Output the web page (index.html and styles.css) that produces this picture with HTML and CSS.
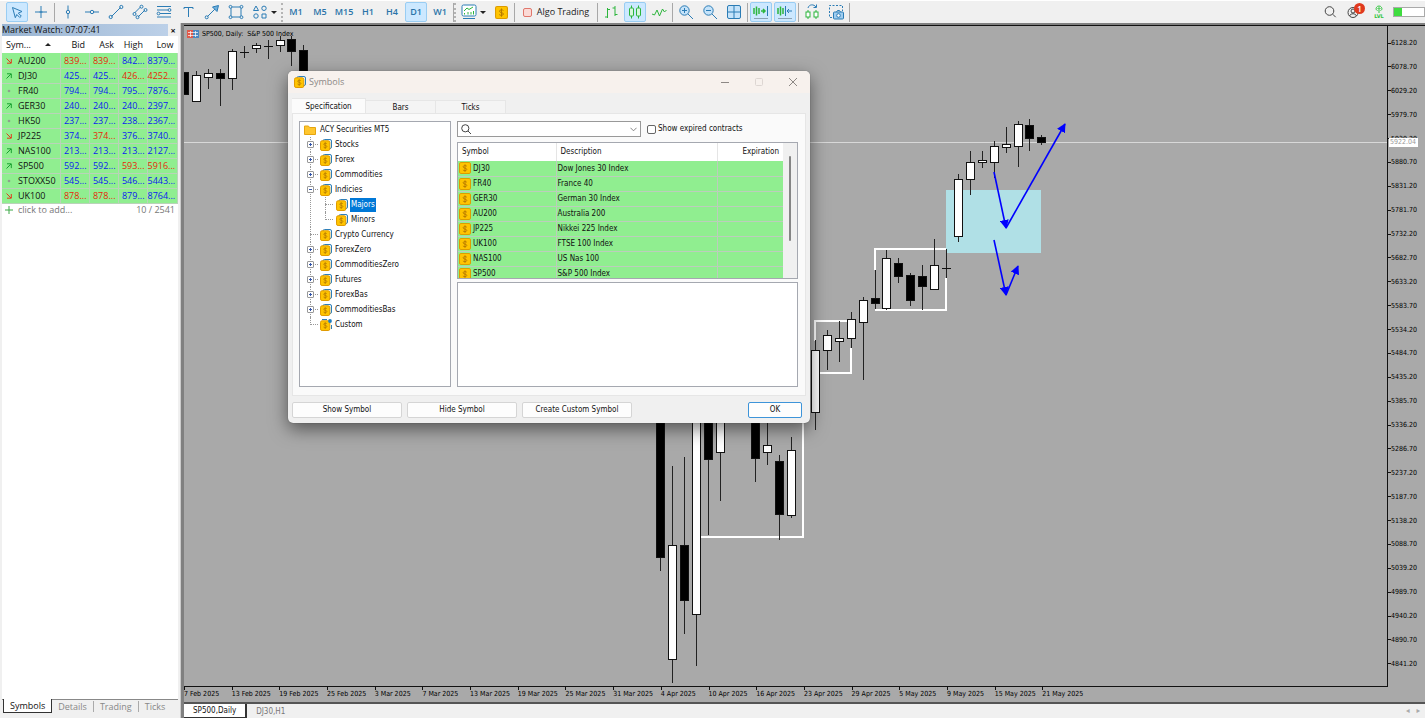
FILE: index.html
```html
<!DOCTYPE html>
<html lang="en">
<head>
<meta charset="utf-8">
<title>SP500,Daily</title>
<link rel="stylesheet" href="styles.css">
</head>
<body>
<svg class="defs" aria-hidden="true">
  <symbol id="coin" viewBox="0 0 12 12"><rect x="3" y=".5" width="8.5" height="9" rx="1.5" fill="#e8f3fb" stroke="#2f7fb8"/><rect x=".5" y="1.8" width="9.3" height="9.7" rx="1.6" fill="#ffc400" stroke="#e09a00"/><path d="M6.9 4.7c-.4-.6-3.2-.8-3.2.5 0 1.5 3.2.8 3.2 2.3 0 1.4-2.9 1.3-3.4.5M5.2 3.2v6.8" fill="none" stroke="#b57900" stroke-width=".8"/></symbol>
  <symbol id="coin1" viewBox="0 0 12 12"><rect x=".5" y=".5" width="11" height="11" rx="1.4" fill="#ffc400" stroke="#dd9c00"/><path d="M7.8 4.2c-.5-.8-3.7-1-3.7.6 0 1.7 3.7.9 3.7 2.6 0 1.6-3.3 1.5-3.9.5M6 2.3v7.6" fill="none" stroke="#b57900" stroke-width=".9"/></symbol>
  <symbol id="up" viewBox="0 0 6 6"><path d="M.5 5.5l4.5-4.5M1 .8h4.3v4.3" fill="none" stroke="#18a030"/></symbol>
  <symbol id="down" viewBox="0 0 6 6"><path d="M.5 .5l4.5 4.500M5.300 1v4.200h-4.300" fill="none" stroke="#e03a1c"/></symbol>
  <symbol id="flat" viewBox="0 0 6 6"><circle cx="3" cy="3" r="1.300" fill="#8fa08f"/></symbol>
</svg>

<header class="toolbar">
  <button class="tool on" aria-label="Cursor"><svg class="ic" viewBox="0 0 16 16"><path d="M3.500 3.500l9.500 4-3.700 1.600 3 3-1.500 1.400-3-3-1.500 3.200z"/></svg></button>
  <button class="tool" aria-label="Crosshair"><svg class="ic" viewBox="0 0 16 16"><path d="M8 2v12M2 8h12M6.500 8h3"/></svg></button>
  <span class="sep"></span>
  <button class="tool" aria-label="Vertical line"><svg class="ic" viewBox="0 0 16 16"><path d="M8 1.500v4.500M8 10v4.500"/><circle cx="8" cy="8" r="1.700"/></svg></button>
  <button class="tool" aria-label="Horizontal line"><svg class="ic" viewBox="0 0 16 16"><path d="M1 8h5M10 8h5"/><circle cx="8" cy="8" r="1.700"/></svg></button>
  <button class="tool" aria-label="Trend line"><svg class="ic" viewBox="0 0 16 16"><path d="M3.500 12.500l9-9"/><circle cx="2.700" cy="13" r="1.600"/><circle cx="13.300" cy="3" r="1.600"/></svg></button>
  <button class="tool" aria-label="Channel"><svg class="ic" viewBox="0 0 16 16"><path d="M2.500 9l6-6M6 13l7-7"/><circle cx="2.500" cy="10" r="1.500"/><circle cx="9.500" cy="2.700" r="1.500"/><circle cx="5.500" cy="13.200" r="1.500"/><circle cx="13.500" cy="6" r="1.500"/></svg></button>
  <button class="tool" aria-label="Fibonacci"><svg class="ic" viewBox="0 0 16 16"><path d="M1 2.500h14M1 6h11M4 9.500h11M1 13h14"/><circle cx="13.500" cy="6" r="1.400"/><circle cx="2.500" cy="9.500" r="1.400"/></svg></button>
  <button class="tool" aria-label="Text"><svg class="ic" viewBox="0 0 16 16"><path d="M4 5v-1.500h9v1.500M8.500 3.500v9.500"/></svg></button>
  <button class="tool" aria-label="Arrow line"><svg class="ic" viewBox="0 0 16 16"><path d="M3.500 12.500l8-8"/><path d="M8.500 3l6-1.500-1.500 6z" fill="#6fb0dd"/><circle cx="2.700" cy="13.300" r="1.500"/></svg></button>
  <button class="tool" aria-label="Rectangle"><svg class="ic" viewBox="0 0 16 16"><path d="M4 3h8M4 13h8M3 4v8M13 4v8"/><circle cx="2.500" cy="2.800" r="1.400"/><circle cx="13.500" cy="2.800" r="1.400"/><circle cx="2.500" cy="13.200" r="1.400"/><circle cx="13.500" cy="13.200" r="1.400"/></svg></button>
  <button class="tool drop" aria-label="Shapes"><svg class="ic" viewBox="0 0 16 16"><path d="M4 2l2.500 4.500h-5zM10 10h4v4h-4z"/><circle cx="12" cy="4.300" r="2.200"/><circle cx="4" cy="12" r="2.200"/></svg><i class="caret"></i></button>
  <span class="grip"></span>
  <button class="tool">M1</button><button class="tool">M5</button><button class="tool">M15</button><button class="tool">H1</button><button class="tool">H4</button><button class="tool on">D1</button><button class="tool">W1</button>
  <span class="sep"></span><span class="grip"></span>
  <button class="tool drop" aria-label="Chart list"><svg class="ic" viewBox="0 0 16 16"><rect x="1" y="1" width="14" height="11" rx="1.500" fill="#fff"/><path d="M2 14.500h12"/><path class="gr" d="M3 7l3-3 2 1.500 4-2.500M3.500 10.500V9M7 10.500V8M10 10.500V8M12.500 10.500V7"/></svg><i class="caret"></i></button>
  <button class="tool" aria-label="Symbols"><svg class="ic coin"><use href="#coin1"/></svg></button>
  <span class="sep"></span>
  <button class="tool algo"><i class="stop"></i>Algo Trading</button>
  <span class="sep"></span>
  <button class="tool" aria-label="Bars"><svg class="ic gr" viewBox="0 0 16 16"><path d="M4.500 4v10M2 13h2.500M4.500 5.500h2.500M12 2v10M9.500 4h2.500M12 10.500h2.500"/></svg></button>
  <button class="tool on" aria-label="Candles"><svg class="ic gr" viewBox="0 0 16 16"><path d="M4.500 1.500v13M11.500 1.500v13"/><rect x="2.500" y="4" width="4" height="8" rx="1" fill="#d7f7dc"/><rect x="9.500" y="4" width="4" height="8" rx="1" fill="#d7f7dc"/></svg></button>
  <button class="tool" aria-label="Line"><svg class="ic gr" viewBox="0 0 16 16"><path d="M1 10l2.500 1 2.500-5 2.500 6 3-7 2 3 2-2"/></svg></button>
  <span class="sep"></span>
  <button class="tool" aria-label="Zoom in"><svg class="ic" viewBox="0 0 16 16"><circle cx="6.500" cy="6.500" r="4.700" fill="#c5e3fa"/><path d="M10 10l5 5M4 6.500h5M6.500 4v5"/></svg></button>
  <button class="tool" aria-label="Zoom out"><svg class="ic" viewBox="0 0 16 16"><circle cx="6.500" cy="6.500" r="4.700" fill="#c5e3fa"/><path d="M10 10l5 5M4 6.500h5"/></svg></button>
  <button class="tool" aria-label="Tile"><svg class="ic" viewBox="0 0 16 16"><rect x="1.500" y="1.500" width="13" height="13" rx="1.500" fill="#c5e3fa"/><path d="M8 2v12M2 8h12"/></svg></button>
  <span class="sep"></span>
  <button class="tool on" aria-label="Auto scroll"><svg class="ic" viewBox="0 0 16 16"><path class="gr" stroke-width="1.500" d="M1 4v6M3.500 2.500v9M6 4v6M8 7h4M10 5l2 2-2 2"/><path d="M14.500 2v10"/><path d="M1 14.500h14" stroke="#8ba3b5"/></svg></button>
  <button class="tool on" aria-label="Chart shift"><svg class="ic" viewBox="0 0 16 16"><path class="gr" stroke-width="1.500" d="M1 4v6M3.500 2.500v9M6 4v6"/><path d="M8.500 2v10M10 7h5M12 5l-2 2 2 2"/><path d="M1 14.500h14" stroke="#8ba3b5"/></svg></button>
  <span class="sep"></span>
  <button class="tool" aria-label="Switch"><svg class="ic" viewBox="0 0 16 16"><path d="M4 4c1-4 6-4 8-1M12.500 .5v3h-3"/><path class="gr" d="M4 6v9M12 6v9"/><rect class="gr" x="2" y="8" width="4" height="5" fill="#fff"/><rect class="gr" x="10" y="8" width="4" height="5" fill="#fff"/></svg></button>
  <button class="tool" aria-label="Screenshot"><svg class="ic" viewBox="0 0 16 16"><path stroke-dasharray="2 1.500" d="M4 13.500H1.500v-12h13V7"/><rect x="5.500" y="8" width="10" height="7" rx="1" fill="#9fcdf0"/><path d="M8.500 8l1-1.500h2l1 1.500"/><circle cx="10.500" cy="11.500" r="1.800" fill="#fff"/></svg></button>
  <span class="sep"></span>
  <div class="status">
    <button class="tool" aria-label="Search"><svg class="ic dk" viewBox="0 0 16 16"><circle cx="7.500" cy="7" r="4.300"/><path d="M10.700 10.200l3 3"/></svg></button>
    <button class="tool account" aria-label="Account"><svg class="ic dk" viewBox="0 0 16 16"><circle cx="7" cy="8.500" r="5"/><circle cx="7" cy="7" r="2"/><path d="M3.500 12c1-3 6-3 7 0"/></svg><span class="badge">1</span></button>
    <button class="tool lvl" aria-label="Level"><svg viewBox="0 0 8 8"><path d="M4 8V3M2.500 5.500C0 5 1 1 4 1s4 4 1.500 4.500M2.500 4l1.500-1.500L5.500 4" fill="none" stroke="#2fc53c"/></svg><span>LVL</span></button>
    <span class="meter"><i></i></span>
  </div>
</header>

<div class="work">
  <aside class="watch">
    <div class="caption"><h2>Market Watch: 07:07:41</h2><button aria-label="Close">×</button></div>
    <table class="quotes">
      <colgroup><col class="c-sym"><col class="c-bid"><col class="c-bid"><col class="c-bid"><col></colgroup>
      <thead><tr><th>Sym... <i class="sort"></i></th><th>Bid</th><th>Ask</th><th>High</th><th>Low</th></tr></thead>
      <tbody>
        <tr><td><svg><use href="#down"/></svg>AU200</td><td class="r">839...</td><td class="r">839...</td><td>842...</td><td>8379...</td></tr>
        <tr><td><svg><use href="#up"/></svg>DJ30</td><td>425...</td><td>425...</td><td class="r">426...</td><td class="r">4252...</td></tr>
        <tr><td><svg><use href="#flat"/></svg>FR40</td><td>794...</td><td>794...</td><td>795...</td><td>7876...</td></tr>
        <tr><td><svg><use href="#up"/></svg>GER30</td><td>240...</td><td>240...</td><td>240...</td><td>2397...</td></tr>
        <tr><td><svg><use href="#flat"/></svg>HK50</td><td>237...</td><td>237...</td><td>238...</td><td>2367...</td></tr>
        <tr><td><svg><use href="#down"/></svg>JP225</td><td>374...</td><td class="r">374...</td><td>376...</td><td>3740...</td></tr>
        <tr><td><svg><use href="#up"/></svg>NAS100</td><td>213...</td><td>213...</td><td>213...</td><td>2127...</td></tr>
        <tr><td><svg><use href="#up"/></svg>SP500</td><td>592...</td><td>592...</td><td class="r">593...</td><td class="r">5916...</td></tr>
        <tr><td><svg><use href="#flat"/></svg>STOXX50</td><td>545...</td><td>545...</td><td>546...</td><td>5443...</td></tr>
        <tr><td><svg><use href="#down"/></svg>UK100</td><td class="r">878...</td><td class="r">878...</td><td>879...</td><td>8764...</td></tr>
      </tbody>
    </table>
    <div class="add"><svg viewBox="0 0 8 8"><path d="M4 0v8M0 4h8" stroke="#3aa845"/></svg><span>click to add...</span><span class="count">10 / 2541</span></div>
    <nav class="watch-tabs"><button class="cur">Symbols</button><button>Details</button><button>Trading</button><button>Ticks</button></nav>
  </aside>

  <main class="chart">
    <div class="plot">
      <svg class="canvas" id="canvas"></svg>
      <div class="chart-title"><svg viewBox="0 0 12 8"><path d="M0 0h6v8H0z" fill="#e05a4a"/><path d="M6 0h6v8H6z" fill="#4a86c0"/><path d="M1 2.500h10M1 5.500h10M3.500 1v6M8.500 1v6" stroke="#fff" stroke-width=".7"/></svg><span>SP500, Daily:&nbsp; S&amp;P 500 Index</span></div>
    </div>
    <div class="prices"><ul id="prices"></ul><span class="last">5922.04</span></div>
    <ul class="dates" id="dates"></ul>
    <nav class="chart-tabs"><button class="cur">SP500,Daily</button><button>DJ30,H1</button><span class="arrows">◂ &nbsp; ▸</span></nav>
  </main>
</div>

<section class="dialog" role="dialog" aria-labelledby="dlg">
  <div class="title"><svg class="sym"><use href="#coin"/></svg><h1 id="dlg">Symbols</h1>
    <button aria-label="Minimize"><svg viewBox="0 0 8 8"><path d="M0 4.500h8" stroke="#8d8885"/></svg></button>
    <button aria-label="Maximize"><svg viewBox="0 0 8 8"><rect x=".5" y=".5" width="7" height="7" rx="1" fill="none" stroke="#ddd6d2"/></svg></button>
    <button aria-label="Close"><svg viewBox="0 0 8 8"><path d="M0 0l8 8M8 0l-8 8" stroke="#8d8885"/></svg></button>
  </div>
  <div class="tabs"><button class="cur">Specification</button><button>Bars</button><button>Ticks</button></div>
  <div class="page">
    <div class="tree">
      <div class="node root"><svg class="folder" viewBox="0 0 12 10"><path d="M.5 1h4l1 1.500h6v7H.5z" fill="#ffc62e" stroke="#e5a50f"/></svg>ACY Securities MT5</div>
      <ul>
        <li><div class="node"><i class="box plus"></i><svg class="sym"><use href="#coin"/></svg>Stocks</div></li>
        <li><div class="node"><i class="box plus"></i><svg class="sym"><use href="#coin"/></svg>Forex</div></li>
        <li><div class="node"><i class="box plus"></i><svg class="sym"><use href="#coin"/></svg>Commodities</div></li>
        <li><div class="node"><i class="box"></i><svg class="sym"><use href="#coin"/></svg>Indicies</div>
          <ul>
            <li><div class="node"><svg class="sym"><use href="#coin"/></svg><span class="picked">Majors</span></div></li>
            <li><div class="node"><svg class="sym"><use href="#coin"/></svg><span class="leaf">Minors</span></div></li>
          </ul></li>
        <li><div class="node"><svg class="sym"><use href="#coin"/></svg>Crypto Currency</div></li>
        <li><div class="node"><i class="box plus"></i><svg class="sym"><use href="#coin"/></svg>ForexZero</div></li>
        <li><div class="node"><i class="box plus"></i><svg class="sym"><use href="#coin"/></svg>CommoditiesZero</div></li>
        <li><div class="node"><i class="box plus"></i><svg class="sym"><use href="#coin"/></svg>Futures</div></li>
        <li><div class="node"><i class="box plus"></i><svg class="sym"><use href="#coin"/></svg>ForexBas</div></li>
        <li><div class="node"><i class="box plus"></i><svg class="sym"><use href="#coin"/></svg>CommoditiesBas</div></li>
        <li><div class="node"><svg class="sym" viewBox="0 0 12 12"><rect x=".5" y="1.800" width="9.300" height="9.700" rx="1.600" fill="#ffc400" stroke="#e09a00"/><path d="M6.900 4.700c-.4-.6-3.200-.8-3.200.5 0 1.500 3.200.8 3.200 2.300 0 1.400-2.900 1.300-3.400.5M5.200 3.200v6.800" fill="none" stroke="#b57900" stroke-width=".8"/><circle cx="10" cy="2" r="1.900" fill="#1f7fc4"/><path d="M11.500 6v4M2 .5h5" stroke="#2f7fb8"/></svg>Custom</div></li>
      </ul>
    </div>
    <div class="side">
      <div class="filter">
        <label class="search"><svg viewBox="0 0 10 10"><circle cx="4.300" cy="4.300" r="3.600"/><path d="M7 7l3 3"/></svg><input type="text" aria-label="Search symbols"><svg class="chev" viewBox="0 0 8 5"><path d="M.5 .5l3.500 3.500L7.500 .5"/></svg></label>
        <label class="expired"><input type="checkbox">Show expired contracts</label>
      </div>
      <div class="list">
        <table>
          <colgroup><col class="c-name"><col><col class="c-exp"></colgroup>
          <thead><tr><th>Symbol</th><th>Description</th><th class="end">Expiration</th></tr></thead>
          <tbody>
            <tr><td><svg class="sym"><use href="#coin1"/></svg>DJ30</td><td>Dow Jones 30 Index</td><td></td></tr>
            <tr><td><svg class="sym"><use href="#coin1"/></svg>FR40</td><td>France 40</td><td></td></tr>
            <tr><td><svg class="sym"><use href="#coin1"/></svg>GER30</td><td>German 30 Index</td><td></td></tr>
            <tr><td><svg class="sym"><use href="#coin1"/></svg>AU200</td><td>Australia 200</td><td></td></tr>
            <tr><td><svg class="sym"><use href="#coin1"/></svg>JP225</td><td>Nikkei 225 Index</td><td></td></tr>
            <tr><td><svg class="sym"><use href="#coin1"/></svg>UK100</td><td>FTSE 100 Index</td><td></td></tr>
            <tr><td><svg class="sym"><use href="#coin1"/></svg>NAS100</td><td>US Nas 100</td><td></td></tr>
            <tr><td><svg class="sym"><use href="#coin1"/></svg>SP500</td><td>S&amp;P 500 Index</td><td></td></tr>
          </tbody>
        </table>
        <div class="scroll"><i></i></div>
      </div>
      <div class="details"></div>
    </div>
  </div>
  <div class="actions"><button>Show Symbol</button><button>Hide Symbol</button><button>Create Custom Symbol</button><button class="ok">OK</button></div>
</section>
<script src="chart.js"></script>
</body>
</html>
```
FILE: styles.css
```css
* { box-sizing: border-box; }
html, body { height: 100%; }
body { margin: 0; display: flex; flex-direction: column; background: #f0f0f0; color: #111; font: 9px/12px "Open Sans", "Noto Sans", sans-serif; overflow: hidden; }
button { font: inherit; color: inherit; border: 0; padding: 0; margin: 0; background: none; }
ul { list-style: none; margin: 0; padding: 0; }
h1, h2 { margin: 0; font: inherit; }
table { border-collapse: collapse; table-layout: fixed; }
svg { flex: none; display: block; }
.defs { position: absolute; width: 0; height: 0; }

/* Toolbar */
.toolbar { flex: none; height: 23px; padding-left: 6px; display: flex; align-items: center; gap: 2px; border-top: 1px solid #fff; background: #f0f0f0; }
.tool { flex: none; width: 22px; height: 20px; display: flex; align-items: center; justify-content: center; border-radius: 2px; color: #2a73a8; font-weight: 600; }
.tool.on { background: #cce8ff; border: 1px solid #99cdf3; }
.tool.drop { width: 30px; gap: 3px; }
.ic { width: 16px; height: 16px; fill: none; stroke: #2b7cb5; stroke-width: 1; }
.ic.coin { width: 13px; height: 13px; stroke: none; }
.gr { stroke: #2cb53c; }
.dk { stroke: #444; }
.caret { border: 3px solid transparent; border-top: 3px solid #222; border-bottom: 0; }
.sep { flex: none; width: 1px; height: 19px; background: #a8a8a8; }
.grip { flex: none; width: 2px; height: 19px; border-left: 2px dotted #b4b4b4; }
.sep + .grip { margin-left: -2px; }
.algo { width: 78px; gap: 5px; color: #222; font-weight: 400; }
.stop { width: 9px; height: 9px; border: 1px solid #e0776c; border-radius: 2px; background: #fbdad6; }
.status { margin-left: auto; display: flex; align-items: center; gap: 2px; }
.account { position: relative; }
.badge { position: absolute; top: 1px; right: 0; width: 11px; height: 11px; border-radius: 50%; background: #e03a1e; color: #fff; line-height: 11px; font-size: 8px; text-align: center; }
.lvl { width: 24px; flex-direction: column; color: #2fc53c; font: bold 5px/6px "DejaVu Sans", sans-serif; }
.lvl svg { width: 8px; height: 8px; }
.meter { width: 32px; height: 10px; border: 1px solid #aaa; background: #fff; }
.meter i { display: block; width: 8px; height: 8px; background: #3fdc3f; }

/* Market watch */
.work { flex: 1; min-height: 0; display: flex; }
.watch { flex: none; width: 181px; padding: 1px 2px 5px; display: flex; flex-direction: column; border-right: 1px solid #ccc; }
.caption { display: flex; height: 12px; line-height: 11px; }
.caption h2 { flex: 1; background: linear-gradient(90deg, #99b4d1, #bcd0e8); }
.caption button { width: 10px; font-weight: 700; }
.quotes { width: 100%; background: #fff; }
.c-sym { width: 58px; }
.c-bid { width: 29px; }
.quotes th { height: 17px; padding: 0 4px 0 0; font-weight: 400; text-align: right; }
.quotes th:first-child { text-align: left; padding-left: 4px; }
.sort { display: inline-block; margin: 0 0 2px 12px; border: 3px solid transparent; border-bottom-color: #222; border-top: 0; }
.quotes td { height: 15px; line-height: 13px; padding: 0 2px 0 0; text-align: right; color: #0a20f0; background: #90ee90; border: 1px solid #b9d3b9; border-width: 0 1px 1px 0; white-space: nowrap; }
.quotes td:first-child { text-align: left; color: #111; }
.quotes td svg { display: inline-block; width: 6px; height: 6px; margin: 0 6px 0 4px; }
.quotes .r { color: #e62808; }
.add { flex: 1; display: flex; gap: 5px; padding: 0 3px; background: #fff; color: #777; }
.add svg { width: 8px; height: 8px; margin-top: 2px; }
.count { margin-left: auto; }
.watch-tabs { display: flex; height: 14px; border-top: 1px solid #888; padding-left: 1px; color: #888; }
.watch-tabs button { padding: 0 6px; }
.watch-tabs button + button + button { border-left: 1px solid #aaa; height: 11px; line-height: 11px; margin-top: 1px; }
.watch-tabs .cur { margin-top: -1px; background: #fff; border: solid #333; border-width: 0 1px 1px; color: #111; }

/* Chart */
.chart { flex: 1; min-width: 0; display: grid; grid-template: 1fr 15px 16px / 1fr 37px; background: #a9a9a9; border-left: 3px solid #808080; border-top: 2px solid #808080; font: 7px/10px "DejaVu Sans Condensed", sans-serif; color: #000; }
.plot { position: relative; overflow: hidden; border: 1px solid #111; border-width: 1px 1px 1px 0; }
.canvas { width: 100%; height: 100%; }
.chart-title { position: absolute; top: 3px; left: 3px; display: flex; gap: 3px; align-items: center; }
.chart-title svg { width: 12px; height: 8px; }
.prices { position: relative; padding: 12px 0 18px; border-top: 1px solid #111; }
.prices ul { height: 100%; display: flex; flex-direction: column; justify-content: space-between; }
.prices li { display: flex; align-items: center; }
.prices li::before { content: ""; width: 3px; height: 1px; background: #111; }
.last { position: absolute; top: 112px; left: 1px; width: 29px; line-height: 9px; background: #fff; color: #999; padding-left: 1px; }
.dates { grid-column: 1 / 3; display: grid; grid-template-columns: repeat(19, 1fr); padding-right: 335px; white-space: nowrap; }
.dates li { min-width: 0; background: linear-gradient(#111, #111) 0 0 / 1px 3px no-repeat; padding-top: 2px; }
.chart-tabs { grid-column: 1 / 3; display: flex; align-items: flex-start; background: #f0f0f0; border-top: 2px solid #555; font: 8px/13px "DejaVu Sans Condensed", sans-serif; color: #777; }
.chart-tabs button { padding: 0 9px; height: 14px; }
.chart-tabs .cur { background: #fff; color: #111; border: solid #333; border-width: 0 2px 1px 0; }
.arrows { margin-left: auto; padding-right: 5px; color: #aaa; }

/* Symbols dialog */
.dialog { position: absolute; left: 288px; top: 71px; width: 522px; display: flex; flex-direction: column; border-radius: 5px; background: #f0f0f0; box-shadow: 0 6px 18px rgba(0,0,0,.5), 0 0 1px #555; overflow: hidden; font: 8px/12px "DejaVu Sans Condensed", sans-serif; }
.sym { width: 12px; height: 12px; }
.title { display: flex; align-items: center; height: 22px; padding: 0 9px 0 6px; background: #f7f1ed; color: #8c8886; font: 9px/12px "Open Sans", sans-serif; }
.title h1 { flex: 1; margin-left: 3px; }
.title button { width: 34px; display: flex; justify-content: center; }
.title button:last-child { width: 16px; margin-left: 9px; }
.title button svg { width: 8px; height: 8px; }
.tabs { display: flex; align-items: flex-end; padding: 5px 4px 0; }
.tabs button { width: 70px; height: 13px; padding-top: 1px; background: #f4f4f4; border: 1px solid #e6e6e6; border-width: 1px 1px 0 0; }
.tabs .cur { width: 74px; height: 15px; background: #fbfbfb; }
.page { display: flex; gap: 6px; margin: 0 4px; padding: 7px 7px 8px 6px; border: 1px solid #e6e6e6; background: #fafafa; height: 283px; }
.tree { width: 152px; flex: none; background: #fff; border: 1px solid #a5a8b0; }
.node { display: flex; align-items: center; height: 15px; gap: 3px; }
.root { padding-left: 4px; gap: 4px; }
.folder { width: 12px; height: 10px; }
.tree li { position: relative; }
.tree > ul { padding-left: 6px; }
.tree > ul > li > .node { padding-left: 14px; }
.tree ul ul { padding-left: 19px; }
.tree ul ul .node { padding-left: 11px; gap: 2px; }
.tree li::before { content: ""; position: absolute; left: 4px; top: 0; bottom: 0; border-left: 1px dotted #999; }
.tree li:last-child::before { bottom: auto; height: 8px; }
.tree ul ul li::before { left: 0; }
.tree .node::before { content: ""; position: absolute; left: 4px; top: 7px; width: 8px; border-top: 1px dotted #999; }
.tree ul ul .node::before { left: 0; }
.root.node::before { display: none; }
.box { position: absolute; z-index: 1; left: 1px; top: 4px; width: 7px; height: 7px; border: 1px solid #999; border-radius: 1px; background: linear-gradient(#3355aa, #3355aa) center / 3px 1px no-repeat #fff; }
.box.plus { background: linear-gradient(#3355aa, #3355aa) center / 3px 1px no-repeat, linear-gradient(#3355aa, #3355aa) center / 1px 3px no-repeat, #fff; }
.picked, .leaf { padding: 0 1px; line-height: 14px; }
.picked { background: #0078d7; color: #fff; }
.side { flex: 1; min-width: 0; display: flex; flex-direction: column; }
.filter { display: flex; align-items: center; gap: 6px; margin-bottom: 5px; }
.search { width: 184px; height: 16px; display: flex; align-items: center; padding: 0 3px; border: 1px solid #999; background: #fff; }
.search svg { width: 10px; height: 10px; fill: none; stroke: #444; }
.search .chev { width: 7px; height: 5px; stroke: #777; }
.search input { flex: 1; min-width: 0; height: 12px; border: 0; outline: 0; font: inherit; }
.expired { display: flex; align-items: center; gap: 2px; }
.expired input { appearance: none; width: 9px; height: 9px; margin: 0; border: 1px solid #666; border-radius: 2px; background: #fff; }
.list { display: flex; height: 137px; overflow: hidden; border: 1px solid #a5a8b0; background: #fff; }
.list table { flex: 1; min-width: 0; height: 0; }
.c-name { width: 98px; }
.c-exp { width: 66px; }
.list th { height: 18px; padding: 0 4px; font-weight: 400; text-align: left; border-right: 1px solid #e5e5e5; }
.list th.end { text-align: right; border-right: 0; }
.list td { height: 15px; padding: 0 1px; line-height: 13px; background: #90ee90; border: 1px solid #bccdbc; border-width: 0 1px 1px 0; white-space: nowrap; }
.list td .sym { display: inline-block; vertical-align: middle; margin-right: 2px; }
.list td:last-child { border-right: 0; }
.scroll { width: 14px; background: #f0f0f0; padding: 13px 6px; }
.scroll i { display: block; width: 2px; height: 85px; background: #858585; border-radius: 1px; }
.details { flex: 1; margin-top: 3px; background: #fff; border: 1px solid #a5a8b0; }
.actions { display: flex; gap: 5px; padding: 6px 8px 5px 4px; }
.actions button { width: 110px; height: 16px; border: 1px solid #d5d5d5; border-radius: 2px; background: #fdfdfd; }
.actions .ok { width: 54px; margin-left: auto; border-color: #3d94d9; }
```
FILE: chart.js
```js
// Each bar: centre x, high, low, body top, body bottom, rising?
const bars = [
  [184,72,94,72,94,0],[196,71,102,75,101,1],[208,69,89,73,77,1],[220,69,106,73,78,0],[232,49,90,51,78,1],
  [244,46,58,52,52,0],[256,43,53,45,48,1],[268,40,59,46,46,0],[280,36,52,40,45,1],[291,36,66,39,51,0],[303,45,110,50,100,0],
  [660,300,571,300,557,0],[672,466,683,545,659,1],[684,457,634,545,600,0],[696,300,666,300,614,1],
  [708,300,535,300,459,0],[720,300,501,300,452,1],[755,300,482,300,458,0],[767,400,465,445,452,1],
  [779,455,540,461,514,0],[791,437,518,450,515,1],[815,340,430,350,412,1],[827,330,370,335,350,1],
  [839,321,362,338,341,1],[851,312,348,319,338,1],[863,297,380,300,322,1],[875,270,309,298,303,0],
  [886,250,310,258,308,1],[898,258,283,263,276,0],[910,273,306,275,300,0],[922,265,310,276,286,0],
  [934,239,289,265,289,1],[946,249,278,268,268,0],[958,174,242,179,236,1],[970,151,195,162,179,1],
  [982,151,168,160,162,1],[994,141,178,146,162,1],[1006,127,153,144,147,1],[1018,121,167,124,146,1],
  [1029,119,151,125,138,0],[1041,135,145,137,142,0]
];
const candles = bars.map(([x, hi, lo, top, bot, up]) =>
  `<path d="M${x + .5} ${hi}V${lo}" stroke="#222"/>` +
  (top === bot
    ? `<path d="M${x - 4} ${top + .5}h9" stroke="#111"/>`
    : `<rect x="${x - 3.5}" y="${top + .5}" width="8" height="${bot - top}" fill="${up ? '#fff' : '#000'}" stroke="#111"/>`)).join('');
document.getElementById('canvas').innerHTML = `
<defs><marker id="head" viewBox="0 0 10 10" refX="9" refY="5" markerWidth="9" markerHeight="9" markerUnits="userSpaceOnUse" orient="auto"><path d="M0 0L10 5L0 10z" fill="#00f"/></marker></defs>
<g transform="translate(-184 -26)">
  <path d="M184 142.5H1400" stroke="#d8d8d8"/>
  <path d="M946 190h95v63h-95z" fill="#b0e0e6"/>
  <g fill="none" stroke="#fff" stroke-width="2">
    <path d="M803 420V537H700"/><path d="M815 341V321H851M851 348V373H819"/><path d="M875 270V249H946M946 278V310H875"/>
  </g>
  ${candles}
  <g stroke="#00f" stroke-width="1.6">
    <path d="M994 172L1006 228" marker-end="url(#head)"/><path d="M1006 228L1065 124" marker-end="url(#head)"/>
    <path d="M994 240L1006 295" marker-end="url(#head)"/><path d="M1006 295L1018 266" marker-end="url(#head)"/>
  </g>
</g>`;
const item = text => `<li>${text}</li>`;
document.getElementById('prices').innerHTML =
  Array.from({ length: 27 }, (_, i) => item((6128.2 - i * 49.5).toFixed(2))).join('');
document.getElementById('dates').innerHTML = [
  '7 Feb', '13 Feb', '19 Feb', '25 Feb', '3 Mar', '7 Mar', '13 Mar', '19 Mar', '25 Mar', '31 Mar', '4 Apr',
  '10 Apr', '16 Apr', '23 Apr', '29 Apr', '5 May', '9 May', '15 May', '21 May'
].map(d => item(d + ' 2025')).join('');
```
